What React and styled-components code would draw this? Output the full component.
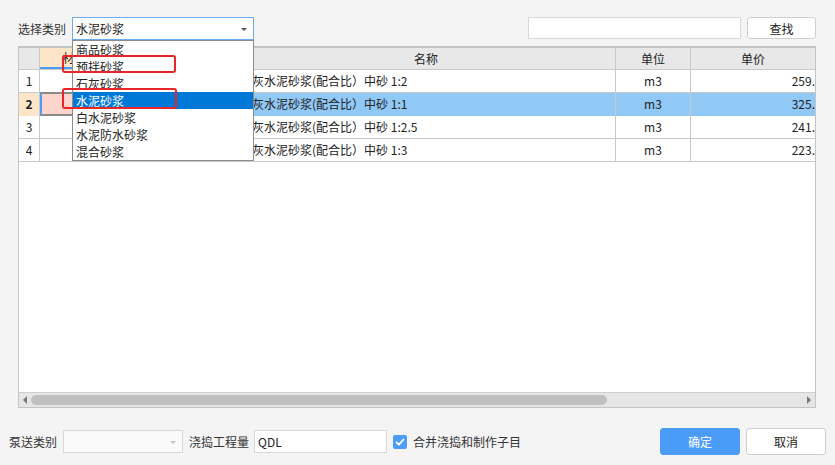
import React from 'react';
import styled, { createGlobalStyle } from 'styled-components';

const GlobalStyle = createGlobalStyle`
  body {
    margin: 0;
    background: #f4f4f4;
    font-family: "Noto Sans CJK SC", "Noto Sans", sans-serif;
    color: #222;
  }
`;

const categories = ['商品砂浆', '预拌砂浆', '石灰砂浆', '水泥砂浆', '白水泥砂浆', '水泥防水砂浆', '混合砂浆'];

const rows = [
  { no: 1, name: '石灰水泥砂浆(配合比）中砂 1:2', unit: 'm3', price: '259.' },
  { no: 2, name: '石灰水泥砂浆(配合比）中砂 1:1', unit: 'm3', price: '325.', selected: true },
  { no: 3, name: '石灰水泥砂浆(配合比）中砂 1:2.5', unit: 'm3', price: '241.' },
  { no: 4, name: '石灰水泥砂浆(配合比）中砂 1:3', unit: 'm3', price: '223.' },
];

const Page = styled.div`
  position: relative;
  width: 835px;
  height: 465px;
  display: flex;
  flex-direction: column;
  overflow: hidden;
`;

const TopBar = styled.div`
  height: 46px;
  box-sizing: border-box;
  padding: 17px 19px 0 18px;
  display: flex;
  align-items: flex-start;
`;

const Label = styled.span`
  font-size: 12px;
  line-height: 23px;
  color: #333;
  margin-right: ${p => p.$gap || 6}px;
  white-space: nowrap;
`;

const SelectWrap = styled.div`
  position: relative;
  width: ${p => p.$w}px;
  height: ${p => p.$h}px;
  box-sizing: border-box;
  background: ${p => (p.$disabled ? '#fafafa' : '#fff')};
  border: 1px solid ${p => (p.$active ? '#6aaaf0' : '#d8d8d8')};
  font-size: 12px;
  line-height: ${p => p.$h - 2}px;
  padding-left: 3px;
`;

const Arrow = styled.span`
  position: absolute;
  right: 6px;
  top: 50%;
  margin-top: -1px;
  border-left: 3px solid transparent;
  border-right: 3px solid transparent;
  border-top: 3px solid ${p => (p.$light ? '#c4c4c4' : '#555')};
`;

const DropList = styled.ul`
  position: absolute;
  left: -1px;
  top: 22px;
  width: 182px;
  height: 121px;
  box-sizing: border-box;
  margin: 0;
  padding: 0;
  list-style: none;
  background: #fff;
  border: 1px solid #8c8c8c;
  z-index: 5;
`;

const DropItem = styled.li`
  height: 17px;
  line-height: 17px;
  font-size: 12px;
  padding-left: 3px;
  background: ${p => (p.$active ? '#0078d7' : 'transparent')};
  color: ${p => (p.$active ? '#fff' : '#222')};
`;

const Spacer = styled.div`
  flex: 1;
`;

const TextInput = styled.div`
  width: ${p => p.$w}px;
  height: ${p => p.$h}px;
  box-sizing: border-box;
  background: #fff;
  border: 1px solid #d8d8d8;
  font-size: 12px;
  line-height: ${p => p.$h - 2}px;
  padding-left: 3px;
  margin-right: ${p => p.$mr || 0}px;
`;

const Button = styled.div`
  width: ${p => p.$w}px;
  height: ${p => p.$h}px;
  box-sizing: border-box;
  border-radius: 3px;
  border: 1px solid ${p => (p.$primary ? '#4a9cf8' : '#cfcfcf')};
  background: ${p => (p.$primary ? '#4a9cf8' : '#fff')};
  color: ${p => (p.$primary ? '#fff' : '#222')};
  font-size: 12px;
  display: flex;
  align-items: center;
  justify-content: center;
  margin-left: ${p => p.$ml || 0}px;
`;

const Grid = styled.div`
  margin: 0 19px 0 18px;
  height: 362px;
  box-sizing: border-box;
  border: 1px solid #c4c4c4;
  border-top: 2px solid #c4c4c4;
  background: #fff;
  display: flex;
  flex-direction: column;
`;

const Row = styled.div`
  display: grid;
  grid-template-columns: 21px 82px 115px 379px 75px 1fr;
  height: ${p => (p.$head ? 22 : 23)}px;
  border-bottom: 1px solid #c8c8c8;
  box-sizing: border-box;
  background: ${p => (p.$head ? '#e8e8e8' : '#fff')};
`;

const Cell = styled.div`
  border-right: 1px solid #c8c8c8;
  font-size: 12px;
  line-height: ${p => (p.$head ? 21 : 22)}px;
  white-space: nowrap;
  overflow: hidden;
  text-align: ${p => p.$align || 'left'};
  padding: ${p => (p.$align === 'left' ? '0 0 0 3px' : '0')};
  background: ${p => p.$bg || 'transparent'};
  font-weight: ${p => (p.$bold ? 700 : 400)};
  color: #222;
  &:last-child {
    border-right: none;
  }
`;

const MarkCell = styled(Cell)`
  box-sizing: border-box;
  ${p =>
    p.$headMark &&
    `border-bottom: 2px solid #4a9ef5; line-height: 20px;`}
  ${p =>
    p.$editing &&
    `border-top: 2px solid #8a8a8a; border-bottom: 2px solid #8a8a8a; border-left: 2px solid #4a9ef5; margin-top: -1px; height: 24px;`}
`;

const Empty = styled.div`
  flex: 1;
`;

const ScrollBar = styled.div`
  height: 14px;
  background: #e6e6e6;
  border-top: 1px solid #cfcfcf;
  display: flex;
  align-items: center;
  padding: 0 4px;
  gap: 4px;
`;

const ScrollArrow = styled.span`
  border-top: 4px solid transparent;
  border-bottom: 4px solid transparent;
  ${p => (p.$dir === 'left' ? 'border-right: 4px solid #777;' : 'border-left: 4px solid #777;')}
`;

const Thumb = styled.div`
  width: 576px;
  height: 10px;
  border-radius: 5px;
  background: #c0c0c0;
`;

const BottomBar = styled.div`
  margin-top: 20px;
  height: 27px;
  padding: 0 9px;
  display: flex;
  align-items: center;
`;

const Check = styled.span`
  width: 14px;
  height: 14px;
  border-radius: 2px;
  background: #4a9ef5;
  display: inline-flex;
  align-items: center;
  justify-content: center;
  margin: 0 6px 0 6px;
`;

const Annotation = styled.div`
  position: absolute;
  left: ${p => p.$x}px;
  top: ${p => p.$y}px;
  width: ${p => p.$w}px;
  height: ${p => p.$h}px;
  box-sizing: border-box;
  border: 2px solid #e8262a;
  border-radius: 3px;
  z-index: 6;
  pointer-events: none;
`;

export default function App() {
  return (
    <Page>
      <GlobalStyle />
      <TopBar>
        <Label>选择类别</Label>
        <SelectWrap $w={182} $h={23} $active>
          水泥砂浆
          <Arrow />
          <DropList>
            {categories.map(c => (
              <DropItem key={c} $active={c === '水泥砂浆'}>{c}</DropItem>
            ))}
          </DropList>
        </SelectWrap>
        <Spacer />
        <TextInput $w={213} $h={22} $mr={6} />
        <Button $w={69} $h={22}>查找</Button>
      </TopBar>

      <Grid>
        <Row $head>
          <Cell $head />
          <MarkCell $head $headMark $align="center" $bg="#fde5c9">材料号</MarkCell>
          <Cell $head $align="center">类别</Cell>
          <Cell $head $align="center">名称</Cell>
          <Cell $head $align="center">单位</Cell>
          <Cell $head $align="center">单价</Cell>
        </Row>
        {rows.map(r => (
          <Row key={r.no}>
            <Cell $align="center" $bold={r.selected} $bg={r.selected ? '#fde5c9' : undefined}>{r.no}</Cell>
            <MarkCell $editing={r.selected} $bg={r.selected ? '#fdd5cc' : undefined} />
            <Cell $bg={r.selected ? '#90c8f6' : undefined} />
            <Cell $align="left" $bg={r.selected ? '#90c8f6' : undefined}>{r.name}</Cell>
            <Cell $align="center" $bg={r.selected ? '#90c8f6' : undefined}>{r.unit}</Cell>
            <Cell $align="right" $bg={r.selected ? '#90c8f6' : undefined}>{r.price}</Cell>
          </Row>
        ))}
        <Empty />
        <ScrollBar>
          <ScrollArrow $dir="left" />
          <Thumb />
          <Spacer />
          <ScrollArrow $dir="right" />
        </ScrollBar>
      </Grid>

      <BottomBar>
        <Label>泵送类别</Label>
        <SelectWrap $w={120} $h={23} $disabled>
          <Arrow $light />
        </SelectWrap>
        <Label style={{ marginLeft: 6 }} $gap={5}>浇捣工程量</Label>
        <TextInput $w={133} $h={23}>QDL</TextInput>
        <Check>
          <svg width="10" height="8" viewBox="0 0 10 8">
            <path d="M1 4 L4 6.5 L9 1" fill="none" stroke="#fff" strokeWidth="1.8" />
          </svg>
        </Check>
        <Label>合并浇捣和制作子目</Label>
        <Spacer />
        <Button $w={80} $h={27} $primary>确定</Button>
        <Button $w={80} $h={27} $ml={6}>取消</Button>
      </BottomBar>

      <Annotation $x={62} $y={55} $w={114} $h={18} />
      <Annotation $x={62} $y={88} $w={115} $h={21} />
    </Page>
  );
}
